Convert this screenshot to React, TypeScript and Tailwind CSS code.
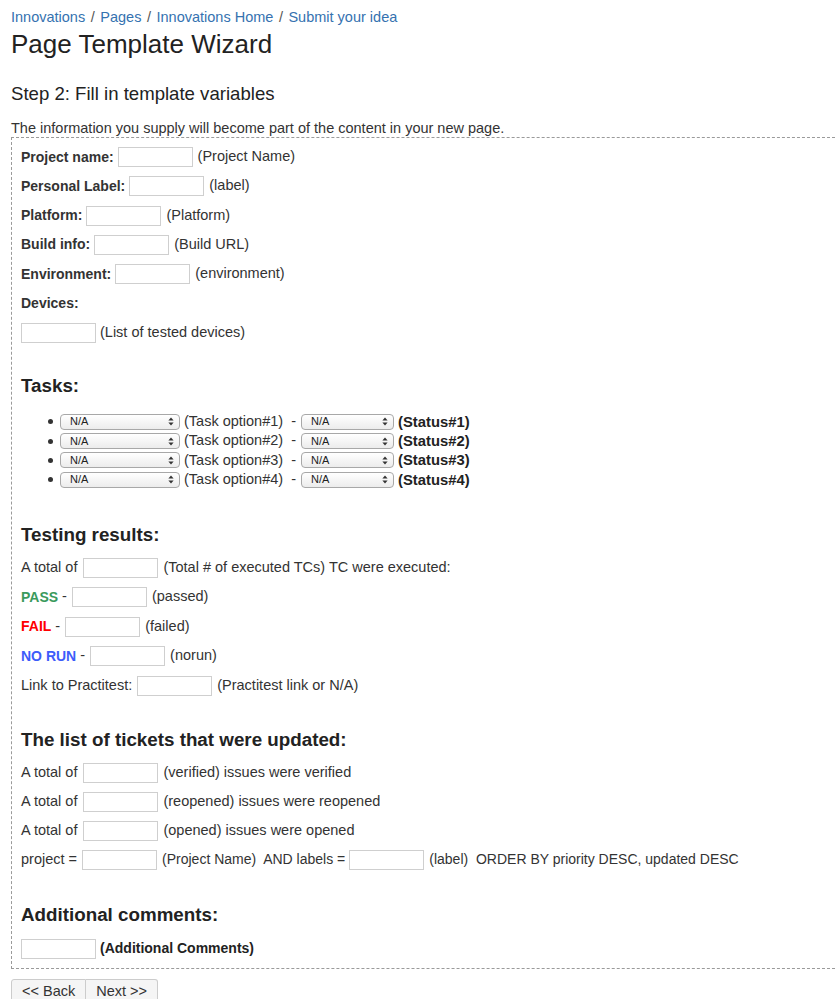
import React from "react";

const Input = ({ className = "" }: { className?: string }) => (
  <span className={"inline-block h-5 w-[75px] border border-[#cfcfcf] bg-white shrink-0 " + className} />
);

const Row = ({ children }: { children: React.ReactNode }) => (
  <div className="flex items-center h-5 whitespace-pre">{children}</div>
);

const Select = ({ w }: { w: string }) => (
  <span
    className={
      "inline-flex items-center justify-between h-4 rounded-[4px] border border-[#a8a8a8] bg-gradient-to-b from-white to-[#ececec] pl-[9px] pr-[5px] text-[11px] leading-none text-[#222] shrink-0 " +
      w
    }
  >
    <span>N/A</span>
    <svg width="6" height="9" viewBox="0 0 6 9">
      <path d="M3 0.5 L5.6 3.6 H0.4 Z" fill="#333" />
      <path d="M3 8.5 L5.6 5.4 H0.4 Z" fill="#333" />
    </svg>
  </span>
);

const Heading = ({ children, className = "" }: { children: React.ReactNode; className?: string }) => (
  <h3 className={"text-[18.8px] leading-[22px] font-bold text-[#222] " + className}>{children}</h3>
);

const Sep = () => <span className="text-[#555] mx-[1.5px]"> / </span>;

export default function App() {
  const tasks = [1, 2, 3, 4];
  return (
    <div className="min-h-[999px] bg-white text-[#333] font-['Liberation_Sans',Arial,sans-serif] text-[14.5px] overflow-hidden">
      <div className="pl-[11px]">
        <div className="pt-[8px] h-[18px] leading-[18px] text-[#3572b0] box-content whitespace-pre">
          <span>Innovations</span>
          <Sep />
          <span>Pages</span>
          <Sep />
          <span>Innovations Home</span>
          <Sep />
          <span>Submit your idea</span>
        </div>
        <h1 className="text-[26px] leading-[30px] mt-[3px] text-[#222]">Page Template Wizard</h1>
        <h2 className="text-[18.6px] leading-[24px] mt-[23px] text-[#222]">Step 2: Fill in template variables</h2>
        <p className="mt-[13px] leading-[18px]">The information you supply will become part of the content in your new page.</p>

        <div className="border border-r-0 border-dashed border-[#9a9a9a] pl-[9px] pt-[9px] pb-[9px]">
          <div className="flex flex-col gap-[9.33px] text-[14px]">
            <Row>
              <b>Project name:</b>
              <Input className="ml-[4px]" />
              <span className="ml-[5px] text-[14.5px]">(Project Name)</span>
            </Row>
            <Row>
              <b>Personal Label:</b>
              <Input className="ml-[4px]" />
              <span className="ml-[5px] text-[14.5px]">(label)</span>
            </Row>
            <Row>
              <b>Platform:</b>
              <Input className="ml-[4px]" />
              <span className="ml-[5px] text-[14.5px]">(Platform)</span>
            </Row>
            <Row>
              <b>Build info:</b>
              <Input className="ml-[4px]" />
              <span className="ml-[5px] text-[14.5px]">(Build URL)</span>
            </Row>
            <Row>
              <b>Environment:</b>
              <Input className="ml-[4px]" />
              <span className="ml-[5px] text-[14.5px]">(environment)</span>
            </Row>
            <Row>
              <b>Devices:</b>
            </Row>
            <Row>
              <Input />
              <span className="ml-[4px] text-[14.5px]">(List of tested devices)</span>
            </Row>
          </div>

          <Heading className="mt-[32px]">Tasks:</Heading>
          <ul className="mt-[15px] pl-[39px]">
            {tasks.map((n) => (
              <li key={n} className="flex items-center h-[19.4px]">
                <span className="w-[5px] h-[5px] rounded-full bg-[#333] -ml-[12px] mr-[7px] shrink-0" />
                <Select w="w-[120px]" />
                <span className="ml-[4px]">(Task option#{n})</span>
                <span className="ml-[8px] mr-[5px]">-</span>
                <Select w="w-[93px]" />
                <b className="ml-[4px] text-[#222] text-[14.8px]">(Status#{n})</b>
              </li>
            ))}
          </ul>

          <Heading className="mt-[34px]">Testing results:</Heading>
          <div className="flex flex-col gap-[9.5px] mt-[12px]">
            <Row>
              <span>A total of</span>
              <Input className="ml-[6px]" />
              <span className="ml-[5px]">(Total # of executed TCs) TC were executed:</span>
            </Row>
            <Row>
              <b className="text-[#3a9a5c] text-[14px]">PASS</b>
              <span> -</span>
              <Input className="ml-[5px]" />
              <span className="ml-[5px]">(passed)</span>
            </Row>
            <Row>
              <b className="text-[#ff0000] text-[14px]">FAIL</b>
              <span> -</span>
              <Input className="ml-[5px]" />
              <span className="ml-[5px]">(failed)</span>
            </Row>
            <Row>
              <b className="text-[#3d5cfa] text-[14px]">NO RUN</b>
              <span> -</span>
              <Input className="ml-[5px]" />
              <span className="ml-[5px]">(norun)</span>
            </Row>
            <Row>
              <span>Link to Practitest:</span>
              <Input className="ml-[5px]" />
              <span className="ml-[5px]">(Practitest link or N/A)</span>
            </Row>
          </div>

          <Heading className="mt-[33px]">The list of tickets that were updated:</Heading>
          <div className="flex flex-col gap-[9px] mt-[12px]">
            <Row>
              <span>A total of</span>
              <Input className="ml-[6px]" />
              <span className="ml-[5px]">(verified) issues were verified</span>
            </Row>
            <Row>
              <span>A total of</span>
              <Input className="ml-[6px]" />
              <span className="ml-[5px]">(reopened) issues were reopened</span>
            </Row>
            <Row>
              <span>A total of</span>
              <Input className="ml-[6px]" />
              <span className="ml-[5px]">(opened) issues were opened</span>
            </Row>
            <Row>
              <span>project =</span>
              <Input className="ml-[5px]" />
              <span className="ml-[5px] text-[14px]">(Project Name)  AND labels =</span>
              <Input className="ml-[4px]" />
              <span className="ml-[5px] text-[14px]">(label)  ORDER BY priority DESC, updated DESC</span>
            </Row>
          </div>

          <Heading className="mt-[34px]">Additional comments:</Heading>
          <div className="mt-[13px]">
            <Row>
              <Input />
              <b className="ml-[4px] text-[#222] text-[14px]">(Additional Comments)</b>
            </Row>
          </div>
        </div>

        <div className="mt-[10px] flex">
          <button className="h-[26px] px-[10px] border border-[#ccc] bg-[#f5f5f5] rounded-l-[3px] text-[14.5px] text-[#333]">
            &lt;&lt; Back
          </button>
          <button className="h-[26px] px-[10px] border border-l-0 border-[#ccc] bg-[#f5f5f5] rounded-r-[3px] text-[14.5px] text-[#333]">
            Next &gt;&gt;
          </button>
        </div>
      </div>
    </div>
  );
}
